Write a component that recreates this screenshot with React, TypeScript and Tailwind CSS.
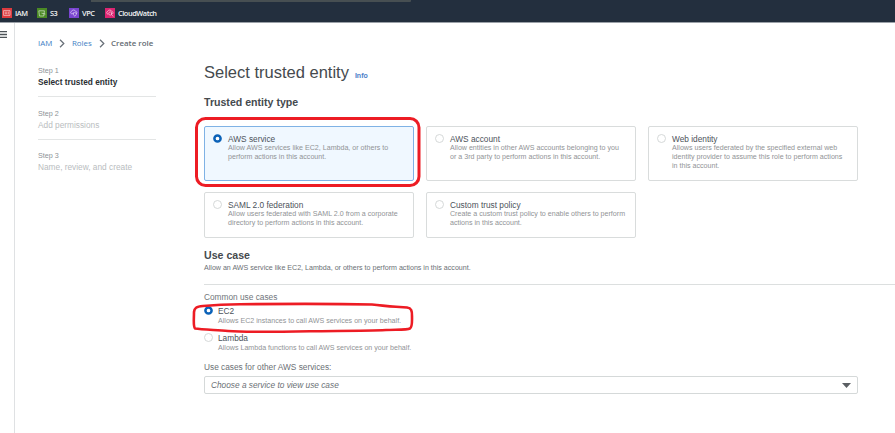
import type { ReactNode } from "react";

function NavIcon({ color, children }: { color: string; children: ReactNode }) {
  return (
    <svg viewBox="0 0 10 10" className={`size-2.5 shrink-0 ${color}`} fill="none" stroke="#fff" strokeOpacity="0.65" strokeWidth="0.8" strokeLinejoin="round" strokeLinecap="round">
      {children}
    </svg>
  );
}

function NavItem({ label, color, width, children }: { label: string; color: string; width: string; children: ReactNode }) {
  return (
    <div className={`flex items-center gap-[3px] ${width}`}>
      <NavIcon color={color}>{children}</NavIcon>
      <span className="font-['Open_Sans',sans-serif] text-[7.4px] leading-[10px] font-semibold tracking-[-0.45px] text-[#f2f3f3]">{label}</span>
    </div>
  );
}

function Radio({ checked = false }: { checked?: boolean }) {
  return (
    <svg viewBox="0 0 9 9" className="size-[9px] shrink-0" fill="#fff">
      {checked ? (
        <circle cx="4.5" cy="4.5" r="3.1" stroke="#0b62b8" strokeWidth="2.5" />
      ) : (
        <circle cx="4.5" cy="4.5" r="4" stroke="#cfd4d4" strokeWidth="0.9" />
      )}
    </svg>
  );
}

function Chevron() {
  return (
    <svg viewBox="0 0 6 10" className="h-[9px] w-[6px]" fill="none" stroke="#687078" strokeWidth="1.4">
      <path d="M0.8 0.8 5 5 0.8 9.2" />
    </svg>
  );
}

function Card({ title, lines, checked = false }: { title: string; lines: string[]; checked?: boolean }) {
  return (
    <div
      className={`flex gap-[6px] rounded-[2px] border pt-[7px] pl-[8px] ${checked ? "border-[#7fb2e5] bg-[#f0f8ff]" : "border-[#d9dcdc] bg-white"}`}
    >
      <Radio checked={checked} />
      <div>
        <div className="text-[8.3px] leading-[10px] text-[#4c525a]">{title}</div>
        {lines.map((line) => (
          <div key={line} className="text-[7.1px] leading-[9px] text-[#919396]">{line}</div>
        ))}
      </div>
    </div>
  );
}

function UseCase({ title, text, checked = false }: { title: string; text: string; checked?: boolean }) {
  return (
    <div className="flex h-[27px] gap-[5px]">
      <Radio checked={checked} />
      <div>
        <div className="text-[8.3px] leading-[10px] text-[#4c525a]">{title}</div>
        <div className="text-[7.1px] leading-[10px] text-[#919396]">{text}</div>
      </div>
    </div>
  );
}

function Step({ n, label, active = false, last = false }: { n: number; label: string; active?: boolean; last?: boolean }) {
  return (
    <li className="h-[42.5px]">
      <div className="text-[7.2px] leading-[10px] text-[#8d9296]">Step {n}</div>
      <div className={`mt-px text-[8.3px] leading-[10px] ${active ? "font-bold text-[#2b2f33]" : "text-[#b9bdc0]"}`}>{label}</div>
      {!last && <div className="mt-[9px] h-px bg-[#e3e5e5]" />}
    </li>
  );
}

export default function App() {
  return (
    <div className="relative flex h-[433px] w-[895px] flex-col overflow-hidden bg-white font-['Liberation_Sans',Arial,sans-serif] whitespace-nowrap">
      <header className="h-[23px] shrink-0 border-b border-[#9ba1a8] bg-[#232f3e]">
        <div className="ml-[91px] h-[2px] w-[320px] rounded-br-[1px] bg-[#474f52]" />
        <nav className="flex h-[21px] items-center pl-[2px]">
          <NavItem label="IAM" color="bg-[#dd3b3f]" width="w-[35px]">
            <rect x="2" y="2.6" width="6" height="4.8" />
            <path d="M3.2 4.2h1.6M3.2 5.7h1.6M6.3 4v2" />
          </NavItem>
          <NavItem label="S3" color="bg-[#4b8a25]" width="w-[32px]">
            <path d="M2.2 2.8h5.2L6.8 8H2.9zM4.8 5.2 8 6" />
          </NavItem>
          <NavItem label="VPC" color="bg-[#7a45d1]" width="w-[36px]">
            <path d="M3.2 5.8H2.6a1.3 1.3 0 0 1 0-2.5C3.2 1.5 6 1.5 6.6 3.4 8 3.4 8.4 5 7.4 5.6M4.2 5.2l1.6-.7 1.6.7c0 1.6-.6 2.4-1.6 3-1-.6-1.6-1.4-1.6-3z" />
          </NavItem>
          <NavItem label="CloudWatch" color="bg-[#dc2571]" width="w-[60px]">
            <path d="M2.8 6.2a1.5 1.5 0 0 1 0-2.9C3.4 1.5 6.4 1.6 6.8 3.5c1 .1 1.5.8 1.3 1.6M6.6 6.6 8 8.2" />
            <circle cx="5.3" cy="5.5" r="1.6" />
          </NavItem>
        </nav>
      </header>

      <div className="flex min-h-0 flex-1">
        <aside className="w-[15px] shrink-0 border-r border-[#dfe1e3] pt-[8px]">
          <svg viewBox="0 0 7 8" className="h-[8px] w-[7px]" stroke="#4d5358" strokeWidth="1.3">
            <path d="M0 .7h7M0 3.5h7M0 6.3h7" />
          </svg>
        </aside>

        <div className="w-[189px] shrink-0 pt-[15px] pl-[23px]">
          <div className="flex h-[11px] items-center font-['Open_Sans',sans-serif] text-[7.9px] leading-[11px]">
            <span className="w-[21px] text-[#3e80c4]">IAM</span>
            <Chevron />
            <span className="ml-[7px] w-[27px] text-[#3e80c4]">Roles</span>
            <Chevron />
            <span className="ml-[6px] font-semibold text-[#646b73]">Create role</span>
          </div>
          <ol className="mt-[17px] w-[118px]">
            <Step n={1} label="Select trusted entity" active />
            <Step n={2} label="Add permissions" />
            <Step n={3} label="Name, review, and create" last />
          </ol>
        </div>

        <main className="min-w-0 flex-1 pt-[38px]">
          <div className="flex h-[22px] items-baseline gap-[6px]">
            <h1 className="text-[16.5px] leading-[22px] text-[#454a4e]">Select trusted entity</h1>
            <span className="text-[7px] font-bold text-[#4a80c8]">Info</span>
          </div>
          <h2 className="mt-[13px] text-[10.6px] leading-[12px] font-bold text-[#454a4e]">Trusted entity type</h2>
          <div className="mt-[18px] grid grid-cols-[210px_210px_210px] grid-rows-[55px_46px] gap-x-[12px] gap-y-[11px]">
            <Card title="AWS service" lines={["Allow AWS services like EC2, Lambda, or others to", "perform actions in this account."]} checked />
            <Card title="AWS account" lines={["Allow entities in other AWS accounts belonging to you", "or a 3rd party to perform actions in this account."]} />
            <Card title="Web identity" lines={["Allows users federated by the specified external web", "identity provider to assume this role to perform actions", "in this account."]} />
            <Card title="SAML 2.0 federation" lines={["Allow users federated with SAML 2.0 from a corporate", "directory to perform actions in this account."]} />
            <Card title="Custom trust policy" lines={["Create a custom trust policy to enable others to perform", "actions in this account."]} />
          </div>
          <h2 className="mt-[11px] text-[10.6px] leading-[12px] font-bold text-[#454a4e]">Use case</h2>
          <p className="mt-[2px] text-[7.1px] leading-[10px] text-[#6b7075]">Allow an AWS service like EC2, Lambda, or others to perform actions in this account.</p>
          <div className="mt-[11px] h-px bg-[#dcdfdf]" />
          <div className="mt-[7px] text-[8.3px] leading-[10px] text-[#70757a]">Common use cases</div>
          <div className="mt-[4px]">
            <UseCase title="EC2" text="Allows EC2 instances to call AWS services on your behalf." checked />
            <UseCase title="Lambda" text="Allows Lambda functions to call AWS services on your behalf." />
          </div>
          <div className="mt-[2px] text-[8.3px] leading-[10px] text-[#6b7075]">Use cases for other AWS services:</div>
          <div className="mt-[4px] flex h-[18px] w-[654px] items-center justify-between rounded-[2px] border border-[#d5d9d9] pr-[6px] pl-[6px]">
            <span className="text-[8.3px] leading-[10px] text-[#6b7075] italic">Choose a service to view use case</span>
            <svg viewBox="0 0 9 5" className="h-[5px] w-[9px]" fill="#5b5f63">
              <path d="M0 0h9L4.5 5z" />
            </svg>
          </div>
        </main>
      </div>

      <svg className="pointer-events-none absolute inset-0" width="895" height="433" fill="none" stroke="#ed1c24" strokeLinejoin="round">
        <rect x="196.5" y="118.5" width="222.5" height="67" rx="9" strokeWidth="3" />
        <path strokeWidth="2.6" d="M203 306C215 305 222 304.500 240 304.200C290 303.800 350 304 372 304.500C382 305.200 386 306.500 396 306.800L407 307.500C411.500 308 412 311 412 316C412 322 412.500 327 410 328.500C407 330 396 329.500 386 330C366 331 340 330.800 310 331.200C270 332 240 332 228 331C216 330 202 329.500 195 328.500C193 326 194 320 194 312C194.500 308 196 306.500 203 306Z" />
      </svg>
    </div>
  );
}
